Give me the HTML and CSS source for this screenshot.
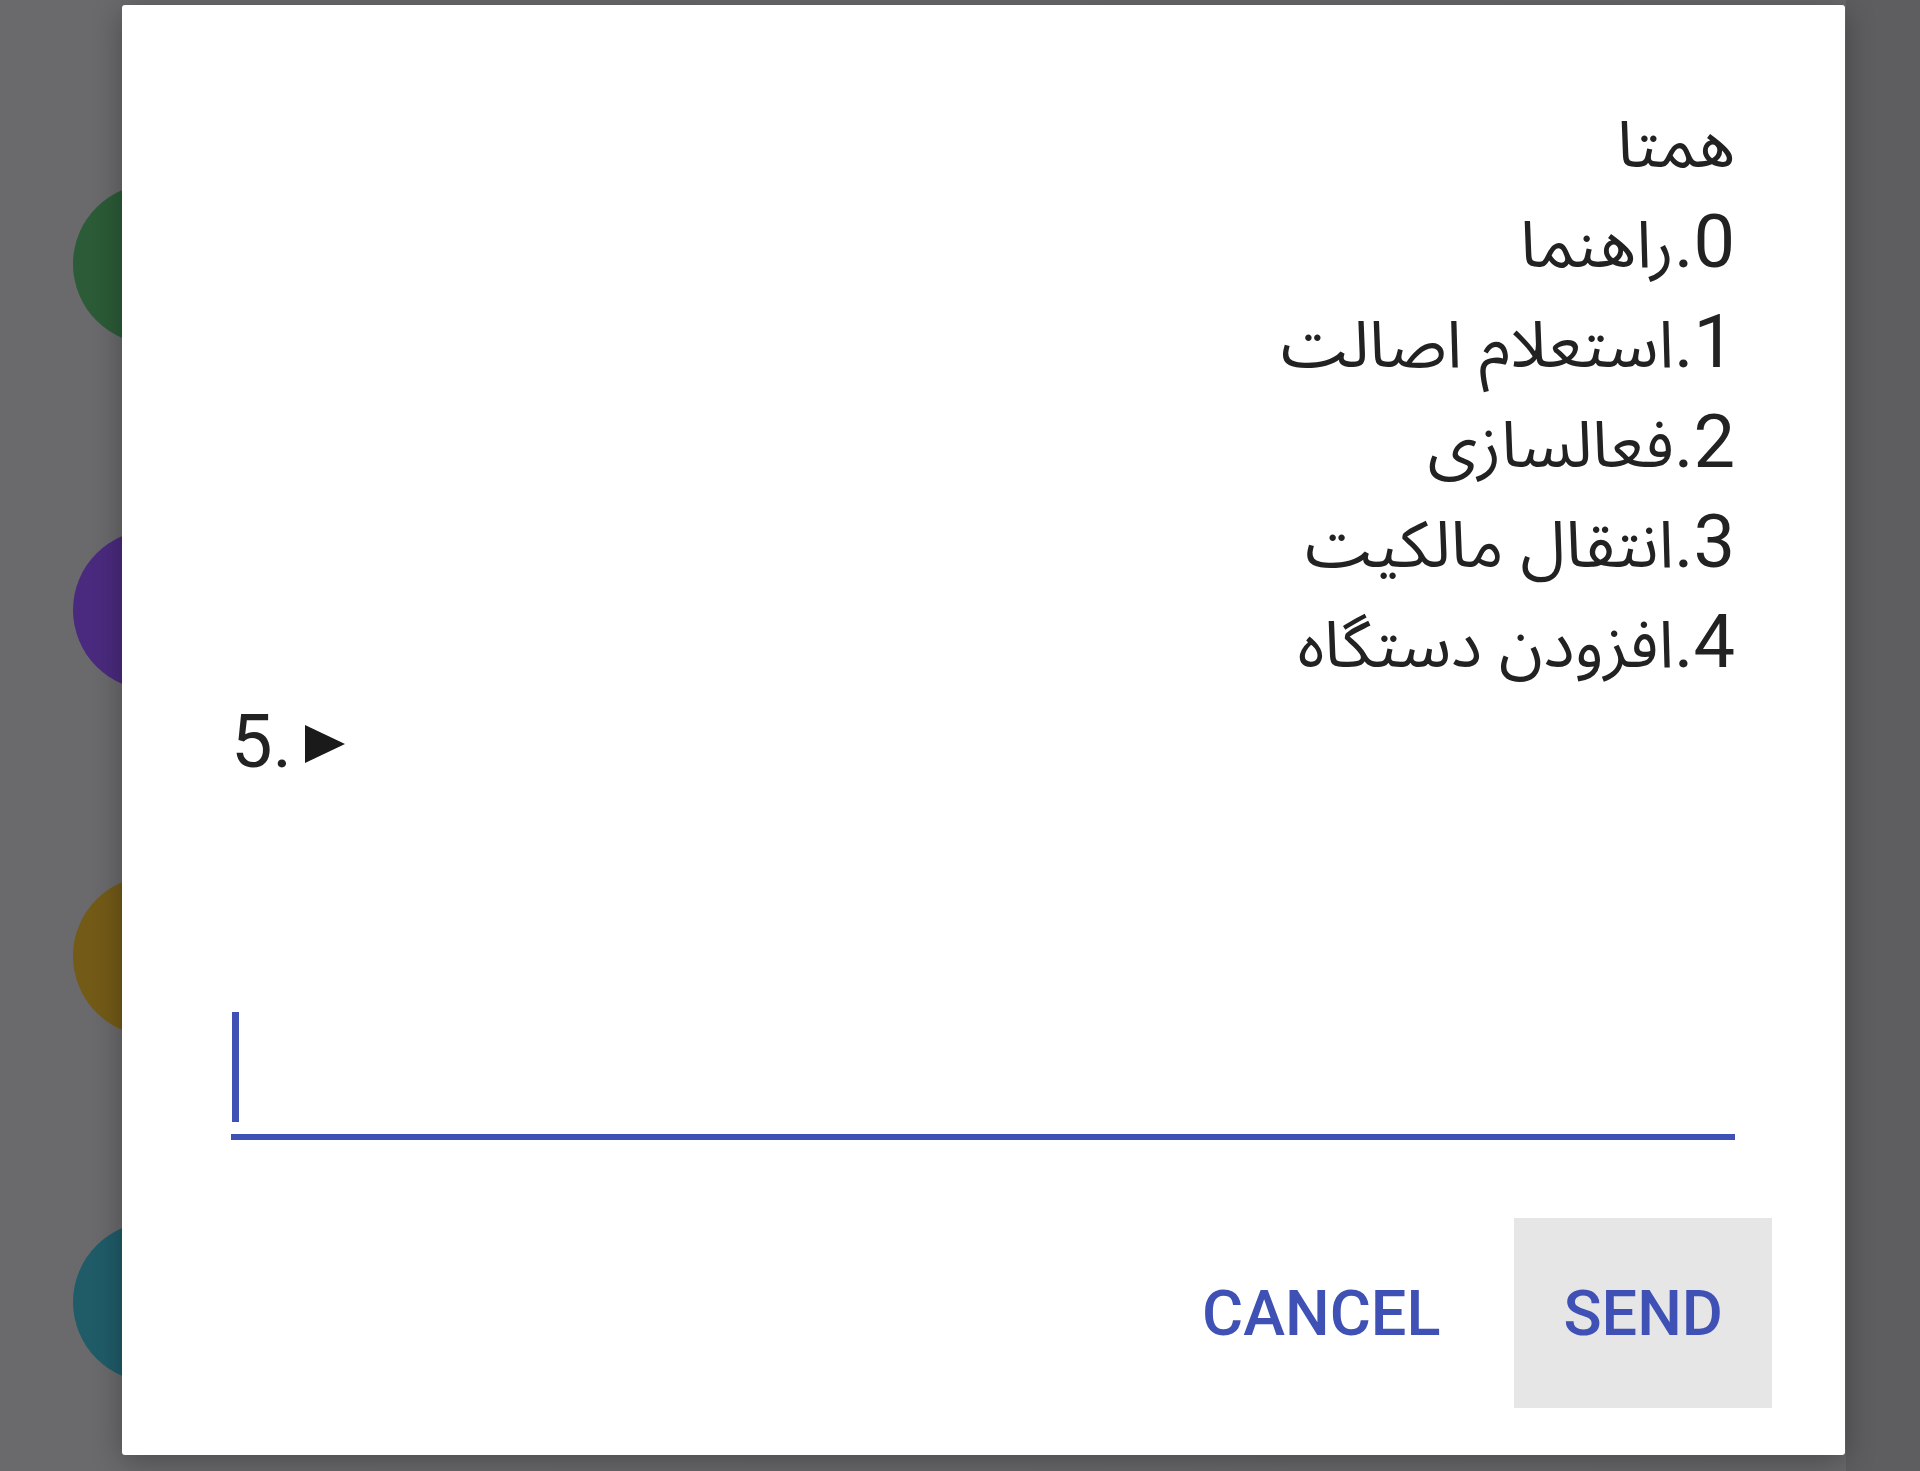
FILE: index.html
```html
<!DOCTYPE html>
<html lang="fa">
<head>
<meta charset="utf-8">
<title>USSD</title>
<link rel="stylesheet" href="styles.css">
</head>
<body>
<div class="screen">
  <div class="app">
    <div class="row"><div class="avatar teal-top"></div><div class="row-text">2 Mobile - Sell</div></div>
    <div class="row"><div class="avatar green"></div></div>
    <div class="row"><div class="avatar purple"></div></div>
    <div class="row"><div class="avatar olive"></div></div>
    <div class="row"><div class="avatar teal"></div></div>
  </div>
  <div class="dialog">
    <div class="message">
      <div class="line" dir="auto"><span class="ar">همتا</span></div>
      <div class="line" dir="auto">0.<span class="ar">راهنما</span></div>
      <div class="line" dir="auto">1.<span class="ar">استعلام اصالت</span></div>
      <div class="line" dir="auto">2.<span class="ar">فعالسازی</span></div>
      <div class="line" dir="auto">3.<span class="ar">انتقال مالکیت</span></div>
      <div class="line" dir="auto">4.<span class="ar">افزودن دستگاه</span></div>
      <div class="line" dir="ltr">5.<svg class="tri" width="40" height="38" viewBox="0 0 40 38"><polygon points="0,0 40,19 0,38" fill="#1a1a1a"/></svg></div>
    </div>
    <div class="field"><span class="cursor"></span></div>
    <div class="actions">
      <button class="btn">CANCEL</button>
      <button class="btn btn-focus">SEND</button>
    </div>
  </div>
</div>
</body>
</html>
```
FILE: styles.css
```css
html, body {
  margin: 0;
  padding: 0;
}
body {
  background: #69696b;
  font-family: Roboto, "DejaVu Sans", sans-serif;
}
.screen {
  position: relative;
  width: 1920px;
  height: 1471px;
  overflow: hidden;
  background: linear-gradient(to right, #6a6a6c 0, #68686a 1846px, #5e5e60 1846px);
}
.app {
  display: flex;
  flex-direction: column;
  gap: 186px;
  padding-left: 73px;
  margin-top: -162px;
}
.row {
  height: 160px;
  display: flex;
  align-items: flex-end;
}
.avatar {
  width: 160px;
  height: 160px;
  border-radius: 50%;
  flex: none;
}
.teal-top { background: #1d5560; }
.green { background: #2b5b37; }
.purple { background: #4a2a7e; }
.olive { background: #735a17; }
.teal { background: #1f5c68; }
.row-text {
  margin-left: 104px;
  margin-bottom: -10px;
  font-size: 72px;
  line-height: 1;
  color: #1c1c1c;
  font-weight: 500;
  white-space: nowrap;
}
.dialog {
  position: absolute;
  left: 122px;
  top: 5px;
  width: 1723px;
  height: 1450px;
  box-sizing: border-box;
  background: #ffffff;
  border-radius: 3px;
  box-shadow: 0 6px 30px rgba(0, 0, 0, 0.3);
  padding: 87px 110px 47px 109px;
  display: flex;
  flex-direction: column;
}
.message {
  font-size: 74px;
  line-height: 100px;
  color: #222222;
}
.line {
  height: 100px;
  text-align: start;
  white-space: nowrap;
}
.ar {
  font-family: "Noto Sans Arabic", "Noto Naskh Arabic", "DejaVu Sans", sans-serif;
  font-size: 65px;
  line-height: 0;
}
.tri {
  margin-left: 13px;
  vertical-align: 4px;
}
.field {
  margin-top: 218px;
  height: 130px;
  box-sizing: border-box;
  border-bottom: 6px solid #3f51b5;
  padding-top: 2px;
}
.cursor {
  display: block;
  width: 7px;
  height: 110px;
  margin-left: 1px;
  background: #3f51b5;
}
.actions {
  margin-top: 78px;
  margin-right: -37px;
  display: flex;
  justify-content: flex-end;
  gap: 25px;
}
.btn {
  height: 190px;
  padding: 0 49px;
  border: none;
  background: transparent;
  font-family: Roboto, sans-serif;
  font-weight: 500;
  font-size: 63px;
  color: #3f51b5;
  cursor: pointer;
}
.btn-focus {
  background: #e6e6e6;
}
```
